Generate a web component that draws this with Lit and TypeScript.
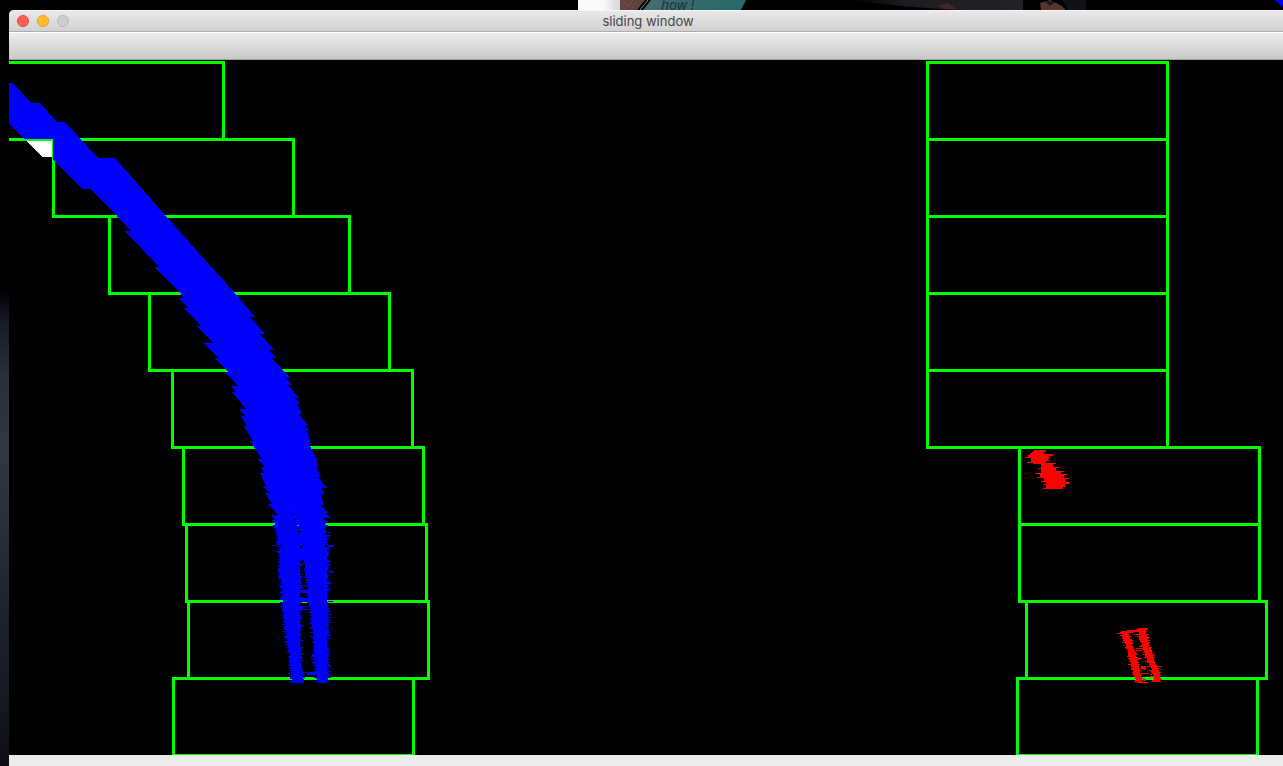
import { LitElement, html, css, svg } from "lit";
import { customElement } from "lit/decorators.js";

type Point = [number, number];

// Search windows, as left and right edge, from the top band to the bottom one.
const BAND_TOP = 62.5;
const BAND_HEIGHT = 77;
const LEFT_LANE: Point[] = [
  [-16.5, 223.5], [53.5, 293.5], [109.5, 349.5], [149.5, 389.5], [172.5, 412.5],
  [183.5, 423.5], [186.5, 426.5], [188.5, 428.5], [173.5, 413.5],
];
const RIGHT_LANE: Point[] = [
  [927.5, 1167.5], [927.5, 1167.5], [927.5, 1167.5], [927.5, 1167.5], [927.5, 1167.5],
  [1019.5, 1259.5], [1019.5, 1259.5], [1026.5, 1266.5], [1017.5, 1257.5],
];

// Solid upper part of the left lane: left edge downwards, then the right edge back up.
const LANE_SHAPE =
  "M9 83V124L24 139H53V160L82 189H90L117 216L131 231H125L159 267H154L181 294L183 298H179L188 308H183L201 326H196" +
  "L213 343H203L219 358H214L228 372H224L238 386H230L237 392H232L246 409H238L245 416H241L247 426H244L253 441H250" +
  "L262 459H257L265 467H261L264 473H260L266 486H262L271 493H265L272 504H268L278 515H270L276 521H324" +
  "V518H331L325 513H329L320 505H324L321 495H324L322 488H327L318 477H321L316 467H319L316 462H318L309 444H311L308 436" +
  "H310L306 431H309L304 426H308L299 414H302L297 404H300L295 398H299L288 385H292L286 378H290L272 358H276L269 350" +
  "H274L260 334H265L250 317H255L234 292L197 251L165 215L115 158H98L65 122H57L40 103H31L13 83Z";

const RED_PATCH =
  "M1034 450H1046V452H1044V454H1053V456H1049V459H1048V460H1050V461H1046V463H1056V464H1053V467H1059V468H1056V471" +
  "H1064V472H1061V474H1067V475H1064V478H1069V479H1066V482H1070V484H1065V486H1066V487H1063V489H1043V488H1046V485" +
  "H1043V484H1046V482H1041V481H1044V478H1037V477H1040V474H1035V473H1041V469H1038V468H1041V464H1033V463H1027V462" +
  "H1031V458H1025V457H1028V455H1030V453H1032Z";

const noise = (seed: number): number => {
  const v = Math.sin(seed * 127.1 + 11.7) * 43758.5453;
  return v - Math.floor(v);
};

const at = (edge: Point[], y: number): number => {
  for (let i = 1; i < edge.length; i++) {
    const [y0, x0] = edge[i - 1];
    const [y1, x1] = edge[i];
    if (y <= y1) return x0 + ((x1 - x0) * (y - y0)) / (y1 - y0);
  }
  return edge[edge.length - 1][1];
};

const row = (x0: number, x1: number, y: number): string => {
  const a = Math.round(x0);
  return `M${a} ${y}H${Math.max(a + 1, Math.round(x1))}v1H${a}z`;
};

// A stroke of detected pixels, one run per scan line, with ragged ends.
const ragged = (from: number, to: number, left: Point[], right: Point[], amp: [number, number], seed: number) => {
  let d = "";
  for (let y = from; y < to; y++) {
    const l = at(left, y) - amp[0] * noise(y + seed) ** 2;
    const r = at(right, y) + amp[1] * noise(y * 1.7 + seed + 40) ** 2;
    d += row(l, r, y);
  }
  return d;
};

const BLUE_ROWS =
  ragged(520, 682,
    [[520, 274], [533, 277], [546, 280], [563, 280], [587, 282], [600, 283], [620, 285], [643, 288], [663, 291], [682, 292]],
    [[520, 296], [547, 300], [600, 300], [653, 300], [670, 301], [682, 304]], [4, 4], 3) +
  ragged(520, 683,
    [[520, 299], [540, 302], [557, 304], [577, 307], [600, 310], [620, 312], [637, 314], [660, 315], [683, 318]],
    [[520, 325], [540, 326], [563, 327], [587, 327], [603, 327], [620, 328], [643, 327], [683, 327]], [4, 4], 91) +
  [[534, 9], [544, 2], [551, 4], [558, 1], [590, 3], [598, 4], [606, 1], [609, 1]]
    .map(([y, h]) => `M297 ${y}H310v${h}H297z`).join("") +
  "M303 672h13v1h3v2h-12v-2h-4zM327 533h5v-1h-7zM325 547h9v-2h-9zM327 573h6v-2h-6zM327 602h6v-1h-6zM327 628h6v-1h-6z" +
  "M274 546h8v-1h-8zM292 682h11v1h-11z";

const RED_ROWS =
  ragged(631, 682, [[631, 1121], [640, 1124], [652, 1129], [668, 1132], [682, 1137]],
    [[631, 1128], [640, 1130], [652, 1135], [668, 1139], [682, 1142]], [3, 3], 12) +
  ragged(629, 681, [[629, 1139], [645, 1142], [660, 1148], [672, 1153], [681, 1154]],
    [[629, 1145], [645, 1149], [660, 1154], [672, 1159], [681, 1160]], [4, 3], 57) +
  "M1138 628h10v2h-10zM1127 630h17v1h-17zM1123 631h15v1h-15zM1117 633h9v1h-9zM1134 634h8v1h-8zM1130 632h3v1h-3z" +
  "M1136 648h8v1h-8zM1136 650h6v1h-6zM1138 658h4v1h-4zM1141 666h5v3h-5zM1143 669h2v1h-2zM1157 666h5v1h-5z" +
  "M1141 673h8v1h-8zM1150 674h2v1h-2zM1143 679h3v2h-3zM1137 682h12v1h-12zM1151 681h10v1h-10z";

@customElement("app-root")
export class AppRoot extends LitElement {
  static styles = css`
    :host {
      display: block;
      height: 100vh;
      position: relative;
      overflow: hidden;
      background: #000;
      font-family: Inter, "Liberation Sans", sans-serif;
    }
    .desktop {
      box-sizing: border-box;
      height: 100%;
      padding: 10px 0 0 9px;
      background: linear-gradient(#000 290px, #161a24 320px, #2a303d 380px, #303745 450px, #2a303c 520px, #1d212b 620px, #13151e 730px, #0d0e15) no-repeat 0 0 / 9px 100%;
    }
    .backdrop {
      position: absolute;
      top: 0;
      left: 0;
      width: 100%;
      height: 10px;
      overflow: visible;
    }
    .window {
      position: relative;
      height: 100%;
      display: flex;
      flex-direction: column;
      overflow: hidden;
      border-top-left-radius: 5px;
      background: #ebebeb;
    }
    .titlebar {
      box-sizing: border-box;
      height: 22px;
      display: grid;
      grid-template-columns: 1fr auto 1fr;
      align-items: center;
      padding: 0 4px 0 8px;
      border-top: 1px solid #f4f4f4;
      border-bottom: 1px solid #adadad;
      background: linear-gradient(#e8e8e8, #d2d2d2);
    }
    .lights {
      display: flex;
      gap: 8px;
    }
    .light {
      box-sizing: border-box;
      width: 12px;
      height: 12px;
      padding: 0;
      border: 1px solid;
      border-radius: 50%;
    }
    .close { background: #ff5f57; border-color: #e24640; }
    .minimize { background: #ffbd2e; border-color: #dfa023; }
    .zoom { background: #cdcdcd; border-color: #b7b7b7; }
    .title {
      margin: 0;
      font-size: 13px;
      line-height: 20px;
      font-weight: 400;
      color: #464646;
    }
    .toolbar {
      box-sizing: border-box;
      height: 28px;
      border-top: 1px solid #fff;
      border-bottom: 1px solid #a3a3a3;
      background: linear-gradient(#ececec, #c9c9c9);
    }
    .plot {
      flex: 1;
      min-height: 0;
      display: block;
      width: 100%;
      background: #000;
    }
    .statusbar {
      height: 11px;
    }
    .boxes { fill: none; stroke: #0f0; stroke-width: 3; stroke-linejoin: round; }
    .blue { fill: #00f; }
    .red { fill: #f00; }
    .white { fill: #fff; }
    .scribble { font: italic 14px "Open Sans", sans-serif; fill: #14343a; }
  `;

  private boxes(lane: Point[]) {
    return lane.map(([l, r], i) => svg`<rect x=${l} y=${BAND_TOP + i * BAND_HEIGHT} width=${r - l} height=${BAND_HEIGHT}></rect>`);
  }

  render() {
    return html`
      <div class="desktop">
        <svg class="backdrop" viewBox="0 0 1283 10" preserveAspectRatio="xMinYMin slice" aria-hidden="true">
          <defs>
            <linearGradient id="paper"><stop offset="0.6" stop-color="#fafafa"></stop><stop offset="1" stop-color="#d5d5d5"></stop></linearGradient>
            <linearGradient id="teal"><stop offset="0" stop-color="#446c6d"></stop><stop offset="0.5" stop-color="#35696c"></stop><stop offset="1" stop-color="#24686a"></stop></linearGradient>
            <linearGradient id="dim"><stop offset="0" stop-color="#000"></stop><stop offset="0.3" stop-color="#1c1b20"></stop><stop offset="1" stop-color="#222127"></stop></linearGradient>
          </defs>
          <rect x="578" width="42" height="10" fill="url(#paper)"></rect>
          <path d="M620 0H645L637 10H620Z" fill="#5c4541"></path>
          <path d="M621 8L626 1L628 7L633 0M632 9L636 2" fill="none" stroke="#8e4434" stroke-width="1"></path>
          <path d="M651 0H746L741 10H643Z" fill="url(#teal)"></path>
          <path d="M640 10L648 0" stroke="#849292" stroke-width="1"></path>
          <text class="scribble" x="661" y="10">how !</text>
          <path d="M850 0H1023V10H955L900 6Z" fill="url(#dim)"></path>
          <path d="M938 6L948 3L956 9H944Z" fill="#40272a"></path>
          <path d="M1040 3L1050 0L1062 6L1066 10H1041Z" fill="#56342f"></path>
          <path d="M1045 1L1055 2L1050 6Z" fill="#191416"></path>
          <path d="M1064 3L1068 10H1086V0H1062Z" fill="#111217"></path>
          <path d="M1275 0H1283V7Z" fill="#00f"></path>
        </svg>
        <main class="window">
          <header class="titlebar">
            <div class="lights">
              <button class="light close" aria-label="Close"></button>
              <button class="light minimize" aria-label="Minimize"></button>
              <button class="light zoom" aria-label="Zoom" disabled></button>
            </div>
            <h1 class="title">sliding window</h1>
          </header>
          <div class="toolbar"></div>
          <svg class="plot" viewBox="9 60 1274 695" preserveAspectRatio="xMinYMin slice" shape-rendering="crispEdges" role="img" aria-label="Detected lane pixels and search windows">
            <path class="white" d="M26 140H52V157H42Z"></path>
            <g class="boxes">${this.boxes(LEFT_LANE)}${this.boxes(RIGHT_LANE)}</g>
            <path class="blue" d=${LANE_SHAPE}></path>
            <path class="blue" d=${BLUE_ROWS}></path>
            <path d="M21 119h1v1h1v1h1v1h-1v-1h-1v-1h-1zM295 504h1v1h-1zM295 511h1v1h-1zM296 514h1v1h-1zM294 519h2v1h-2z"></path>
            <path class="red" d=${RED_PATCH}></path>
            <path class="red" d=${RED_ROWS}></path>
          </svg>
          <div class="statusbar"></div>
        </main>
      </div>
    `;
  }
}
